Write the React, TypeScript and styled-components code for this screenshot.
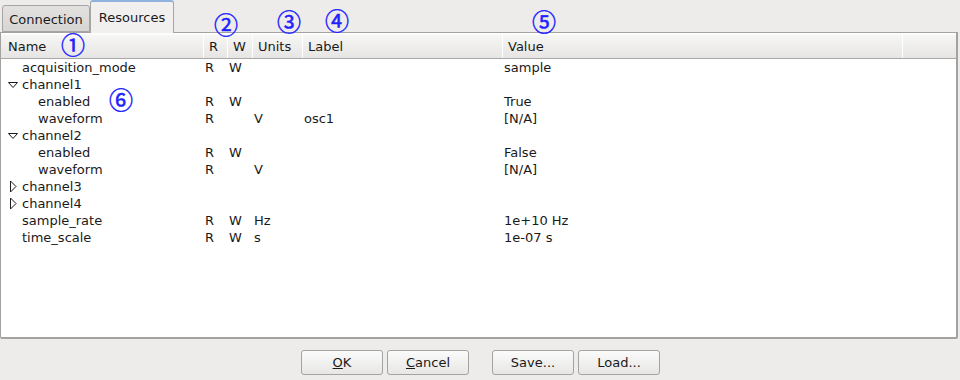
import React from 'react';
import styled, { createGlobalStyle } from 'styled-components';

const GlobalStyle = createGlobalStyle`
  html, body {
    margin: 0;
    padding: 0;
    background: #edeceb;
  }
  body {
    font-family: "DejaVu Sans", "Liberation Sans", sans-serif;
    font-size: 13px;
    color: #1a1a1a;
  }
`;

const Window = styled.div`
  position: relative;
  width: 960px;
  height: 380px;
  background: #edeceb;
  display: flex;
  flex-direction: column;
  overflow: hidden;
`;

const TabBar = styled.div`
  display: flex;
  align-items: flex-end;
  height: 32px;
  padding-left: 2px;
`;

const Tab = styled.div<{ $active?: boolean }>`
  box-sizing: border-box;
  height: ${(p) => (p.$active ? '33px' : '27px')};
  margin-bottom: ${(p) => (p.$active ? '-1px' : '0')};
  display: flex;
  align-items: center;
  justify-content: center;
  border: 1px solid #a6a5a3;
  border-bottom: ${(p) => (p.$active ? 'none' : '1px solid #a6a5a3')};
  border-top: ${(p) => (p.$active ? '2px solid #8fb3de' : '1px solid #a6a5a3')};
  border-radius: 3px 3px 0 0;
  background: ${(p) =>
    p.$active ? '#f1f0ef' : 'linear-gradient(#e3e2e1, #d6d5d4)'};
  position: relative;
  z-index: ${(p) => (p.$active ? 2 : 1)};
  padding-top: ${(p) => (p.$active ? '0' : '2px')};
  width: ${(p) => (p.$active ? '84px' : '88px')};
`;

const Frame = styled.div`
  box-sizing: border-box;
  margin: 0 2px 0 0;
  height: 307px;
  border: 1px solid #a3a2a0;
  border-right-width: 2px;
  border-bottom-width: 2px;
  border-radius: 0 0 2px 2px;
  background: #ffffff;
  display: flex;
  flex-direction: column;
  position: relative;
  z-index: 1;
`;

const cols = '202px 24px 25px 50px 200px 400px 1fr';

const Header = styled.div`
  display: grid;
  grid-template-columns: ${cols};
  height: 24px;
  margin-top: 1px;
  background: linear-gradient(#f7f7f6, #e6e5e4);
  border-bottom: 1px solid #a9a8a7;
  box-shadow: inset 0 1px 0 #fbfbfb;
`;

const HeadCell = styled.div<{ $first?: boolean }>`
  display: flex;
  align-items: center;
  padding-left: ${(p) => (p.$first ? '7px' : '5px')};
  border-left: ${(p) => (p.$first ? 'none' : '1px solid #ffffff')};
  white-space: nowrap;
  overflow: hidden;
`;

const Body = styled.div``;

const Row = styled.div`
  display: grid;
  grid-template-columns: ${cols};
  height: 17px;
  align-items: center;
`;

const Cell = styled.div`
  padding-left: 2px;
  white-space: nowrap;
`;

const NameCell = styled.div<{ $depth: number }>`
  display: flex;
  align-items: center;
  padding-left: ${(p) => 4 + p.$depth * 16}px;
  white-space: nowrap;
`;

const Expander = styled.span`
  width: 17px;
  height: 17px;
  display: inline-flex;
  align-items: center;
  justify-content: flex-start;
  flex: none;
`;

const Footer = styled.div`
  display: flex;
  justify-content: center;
  padding-top: 11px;
  padding-left: 1px;
`;

const ButtonGroup = styled.div`
  display: flex;
  gap: 4px;
  & + & {
    margin-left: 23px;
  }
`;

const Button = styled.button`
  box-sizing: border-box;
  width: 82px;
  height: 25px;
  font-family: "DejaVu Sans", "Liberation Sans", sans-serif;
  font-size: 13px;
  color: #1a1a1a;
  border: 1px solid #a4a3a1;
  border-radius: 3px;
  background: linear-gradient(#fbfbfb, #e7e6e5);
  padding: 0;
`;

const Mnemonic = styled.span`
  text-decoration: underline;
`;

const Marker = styled.span<{ $x: number; $y: number }>`
  position: absolute;
  left: ${(p) => p.$x}px;
  top: ${(p) => p.$y}px;
  transform: translate(-50%, -50%);
  font-family: "Noto Sans CJK JP", "DejaVu Sans", sans-serif;
  font-size: 24px;
  line-height: 24px;
  color: #1f1fff;
  -webkit-text-stroke: 0.5px #1f1fff;
  z-index: 5;
`;

const Arrow = ({ open }: { open: boolean }) =>
  open ? (
    <svg width="12" height="8" viewBox="0 0 12 8" style={{ marginLeft: 2 }}>
      <path d="M1.5 1.5 L10.5 1.5 L6 6.5 Z" fill="none" stroke="#1a1a1a" strokeWidth="1" />
    </svg>
  ) : (
    <svg width="12" height="13" viewBox="0 0 12 13" style={{ marginLeft: 2 }}>
      <path d="M3.5 1 L3.5 12 L9 6.5 Z" fill="none" stroke="#1a1a1a" strokeWidth="1" />
    </svg>
  );

type Item = {
  name: string;
  depth: number;
  expander?: 'open' | 'closed';
  r?: string;
  w?: string;
  units?: string;
  label?: string;
  value?: string;
};

const rows: Item[] = [
  { name: 'acquisition_mode', depth: 0, r: 'R', w: 'W', value: 'sample' },
  { name: 'channel1', depth: 0, expander: 'open' },
  { name: 'enabled', depth: 1, r: 'R', w: 'W', value: 'True' },
  { name: 'waveform', depth: 1, r: 'R', units: 'V', label: 'osc1', value: '[N/A]' },
  { name: 'channel2', depth: 0, expander: 'open' },
  { name: 'enabled', depth: 1, r: 'R', w: 'W', value: 'False' },
  { name: 'waveform', depth: 1, r: 'R', units: 'V', value: '[N/A]' },
  { name: 'channel3', depth: 0, expander: 'closed' },
  { name: 'channel4', depth: 0, expander: 'closed' },
  { name: 'sample_rate', depth: 0, r: 'R', w: 'W', units: 'Hz', value: '1e+10 Hz' },
  { name: 'time_scale', depth: 0, r: 'R', w: 'W', units: 's', value: '1e-07 s' },
];

// centre points of the circled annotations
const markers = [
  { t: '①', x: 73, y: 44 },
  { t: '②', x: 226, y: 24 },
  { t: '③', x: 289, y: 21 },
  { t: '④', x: 337, y: 20 },
  { t: '⑤', x: 544, y: 21 },
  { t: '⑥', x: 121, y: 99 },
];

export default function App() {
  return (
    <Window>
      <GlobalStyle />
      <TabBar>
        <Tab>Connection</Tab>
        <Tab $active>Resources</Tab>
      </TabBar>
      <Frame>
        <Header>
          <HeadCell $first>Name</HeadCell>
          <HeadCell>R</HeadCell>
          <HeadCell>W</HeadCell>
          <HeadCell>Units</HeadCell>
          <HeadCell>Label</HeadCell>
          <HeadCell>Value</HeadCell>
          <HeadCell />
        </Header>
        <Body>
          {rows.map((row, i) => (
            <Row key={i}>
              <NameCell $depth={row.depth}>
                <Expander>{row.expander && <Arrow open={row.expander === 'open'} />}</Expander>
                {row.name}
              </NameCell>
              <Cell>{row.r}</Cell>
              <Cell>{row.w}</Cell>
              <Cell>{row.units}</Cell>
              <Cell>{row.label}</Cell>
              <Cell>{row.value}</Cell>
              <Cell />
            </Row>
          ))}
        </Body>
      </Frame>
      <Footer>
        <ButtonGroup>
          <Button>
            <Mnemonic>O</Mnemonic>K
          </Button>
          <Button>
            <Mnemonic>C</Mnemonic>ancel
          </Button>
        </ButtonGroup>
        <ButtonGroup>
          <Button>Save...</Button>
          <Button>Load...</Button>
        </ButtonGroup>
      </Footer>
      {markers.map((m) => (
        <Marker key={m.t} $x={m.x} $y={m.y}>
          {m.t}
        </Marker>
      ))}
    </Window>
  );
}
